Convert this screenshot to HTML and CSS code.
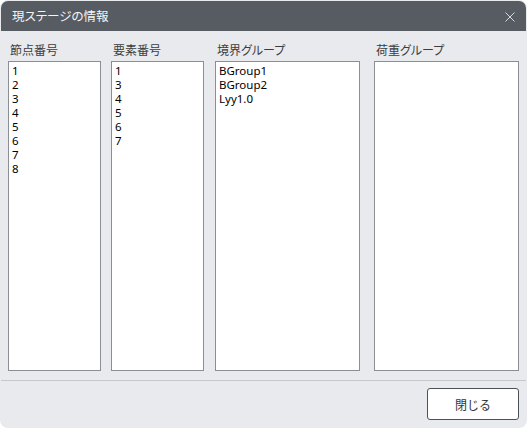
FILE: index.html
```html
<!DOCTYPE html>
<html lang="ja">
<head>
<meta charset="utf-8">
<title>現ステージの情報</title>
<link rel="stylesheet" href="styles.css">
</head>
<body>
<div class="window">
  <div class="titlebar">
    <span class="title">現ステージの情報</span>
    <span class="close" aria-label="閉じる">
      <svg width="10" height="10" viewBox="0 0 10 10"><path d="M0.5 0.5 L9.5 9.5 M9.5 0.5 L0.5 9.5" stroke="#d6d8db" stroke-width="1" fill="none"/></svg>
    </span>
  </div>
  <div class="content">
    <div class="columns">
      <div class="col">
        <div class="label">節点番号</div>
        <ul class="list narrow">
          <li>1</li><li>2</li><li>3</li><li>4</li><li>5</li><li>6</li><li>7</li><li>8</li>
        </ul>
      </div>
      <div class="col">
        <div class="label">要素番号</div>
        <ul class="list narrow">
          <li>1</li><li>3</li><li>4</li><li>5</li><li>6</li><li>7</li>
        </ul>
      </div>
      <div class="col">
        <div class="label">境界グループ</div>
        <ul class="list wide">
          <li>BGroup1</li><li>BGroup2</li><li>Lyy1.0</li>
        </ul>
      </div>
      <div class="col">
        <div class="label">荷重グループ</div>
        <ul class="list wide"></ul>
      </div>
    </div>
  </div>
  <div class="separator"></div>
  <div class="footer">
    <button class="btn">閉じる</button>
  </div>
</div>
</body>
</html>
```

FILE: styles.css
```css
html, body {
  margin: 0;
  padding: 0;
  background: #ffffff;
}
body {
  width: 527px;
  height: 428px;
  overflow: hidden;
  font-family: "Noto Sans", "Noto Sans CJK JP", sans-serif;
}
.window {
  width: 527px;
  height: 428px;
  box-sizing: border-box;
  padding: 1px 1px 0 1px;
  background: #e9eaee;
  border-radius: 8px;
  display: flex;
  flex-direction: column;
}
.titlebar {
  height: 30px;
  flex: none;
  background: #575c63;
  border-radius: 7px 7px 0 0;
  display: flex;
  align-items: center;
  justify-content: space-between;
  padding: 0 11px 0 11px;
}
.title {
  font-family: "Noto Sans CJK JP", sans-serif;
  font-feature-settings: "palt";
  font-size: 12.5px;
  color: #f4f5f6;
  line-height: 16px;
}
.close {
  display: flex;
  width: 10px;
  height: 10px;
  margin-top: 1px;
}
.content {
  padding: 11px 6px 0 7px;
}
.columns {
  display: grid;
  grid-template-columns: 103px 104px 159px 145px;
}
.label {
  font-family: "Noto Sans CJK JP", sans-serif;
  font-feature-settings: "palt";
  font-size: 12px;
  line-height: 16px;
  color: #3c3d40;
  padding-left: 2px;
  margin-bottom: 3px;
}
.list {
  margin: 0;
  padding: 2px 3px;
  list-style: none;
  box-sizing: border-box;
  height: 310px;
  background: #ffffff;
  border: 1px solid #8b8e94;
  font-size: 11.5px;
  line-height: 14px;
  color: #000000;
}
.narrow { width: 93px; }
.wide { width: 145px; }
.separator {
  height: 1px;
  background: #c5c9cc;
  margin-top: 9px;
}
.footer {
  display: flex;
  justify-content: flex-end;
  padding: 7px 7px 0 0;
}
.btn {
  width: 92px;
  height: 32px;
  box-sizing: border-box;
  background: #ffffff;
  border: 1px solid #4c5058;
  border-radius: 3px;
  font-family: "Noto Sans CJK JP", sans-serif;
  font-size: 12px;
  color: #333438;
  padding: 0;
}
```
